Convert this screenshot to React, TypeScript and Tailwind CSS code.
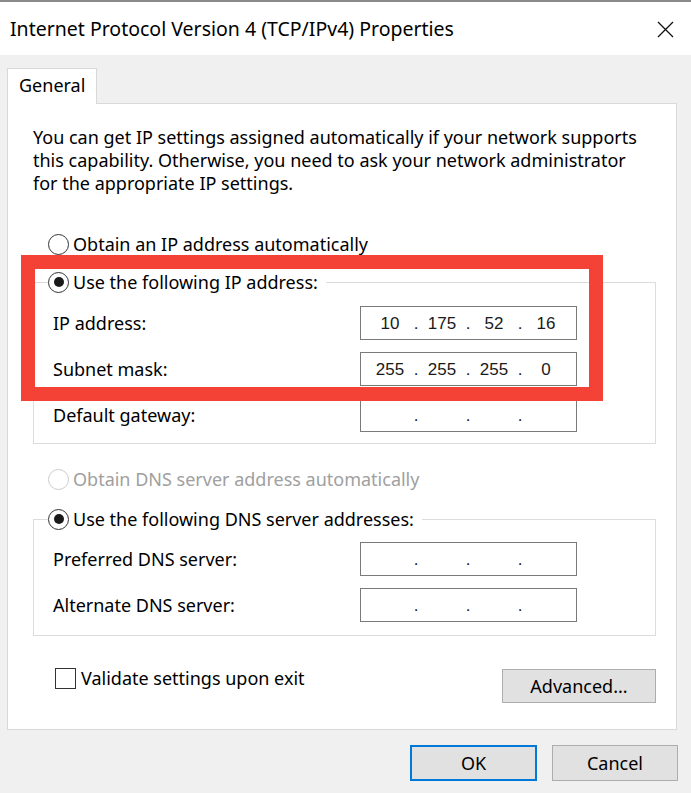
import { Fragment } from "react";

function Radio({ checked, disabled }: { checked?: boolean; disabled?: boolean }) {
  return (
    <span
      className={
        disabled
          ? "flex h-[21px] w-[21px] shrink-0 items-center justify-center rounded-full border-[1.5px] border-[#cccccc] bg-white"
          : "flex h-[21px] w-[21px] shrink-0 items-center justify-center rounded-full border-[1.5px] border-[#333333] bg-white"
      }
    >
      {checked && <span className="h-[10px] w-[10px] rounded-full bg-[#1a1a1a]" />}
    </span>
  );
}

function IpBox({ parts }: { parts: string[] }) {
  return (
    <div className="flex h-[34px] w-[217px] items-center border border-[#7a7a7a] bg-white pl-[6px] font-['Liberation_Sans',sans-serif] text-[17px] text-[#1a1a1a]">
      {parts.map((p, i) => (
        <Fragment key={i}>
          {i > 0 && <span className="w-[6px] text-center">.</span>}
          <span className="w-[46px] text-center">{p}</span>
        </Fragment>
      ))}
    </div>
  );
}

function Field({ label, parts }: { label: string; parts: string[] }) {
  return (
    <div className="flex items-center">
      <span className="w-[307px]">{label}</span>
      <IpBox parts={parts} />
    </div>
  );
}

export default function App() {
  const empty = ["", "", "", ""];
  return (
    <div className="relative h-[793px] w-[691px] overflow-hidden bg-[#f0f0f0] font-['Noto_Sans',sans-serif] text-[18px] leading-[23px] text-black">
      {/* Title bar */}
      <div className="h-[55px] border-t-2 border-[#8a8a8a] bg-white">
        <div className="flex h-full items-center justify-between pl-[10px] pr-[17px]">
          <span className="text-[19.5px]">Internet Protocol Version 4 (TCP/IPv4) Properties</span>
          <svg width="17" height="17" viewBox="0 0 17 17" className="mt-[1px]">
            <path d="M1 1 L16 16 M16 1 L1 16" stroke="#111" strokeWidth="1.3" fill="none" />
          </svg>
        </div>
      </div>

      {/* Tab */}
      <div className="relative z-10 ml-[7px] mt-[13px] -mb-px flex h-[36px] w-[90px] items-start border border-b-0 border-[#d9d9d9] bg-white pl-[11px] pt-[5px]">
        General
      </div>

      {/* Panel */}
      <div className="ml-[7px] h-[627px] w-[670px] border border-[#d9d9d9] bg-white pl-[25px] pr-[20px] pt-[22px]">
        <p>
          You can get IP settings assigned automatically if your network supports
          <br />
          this capability. Otherwise, you need to ask your network administrator
          <br />
          for the appropriate IP settings.
        </p>

        <div className="ml-[15px] mt-[37px] flex h-[24px] items-center gap-[4px]">
          <Radio />
          <span>Obtain an IP address automatically</span>
        </div>

        <fieldset className="mt-[14px] w-[623px] border border-[#dcdcdc] pb-[11px] pl-[19px] pr-[14px]">
          <legend className="ml-[-5px] flex h-[24px] items-center gap-[4px] pr-[8px]">
            <Radio checked />
            <span>Use the following IP address:</span>
          </legend>
          <div className="mt-[12px] flex flex-col gap-[12px]">
            <Field label="IP address:" parts={["10", "175", "52", "16"]} />
            <Field label="Subnet mask:" parts={["255", "255", "255", "0"]} />
            <Field label="Default gateway:" parts={empty} />
          </div>
        </fieldset>

        <div className="ml-[15px] mt-[23px] flex h-[24px] items-center gap-[4px] text-[#a0a0a0]">
          <Radio disabled />
          <span>Obtain DNS server address automatically</span>
        </div>

        <fieldset className="mt-[16px] w-[623px] border border-[#dcdcdc] pb-[13px] pl-[19px] pr-[14px]">
          <legend className="ml-[-5px] flex h-[24px] items-center gap-[4px] pr-[8px]">
            <Radio checked />
            <span>Use the following DNS server addresses:</span>
          </legend>
          <div className="mt-[11px] flex flex-col gap-[12px]">
            <Field label="Preferred DNS server:" parts={empty} />
            <Field label="Alternate DNS server:" parts={empty} />
          </div>
        </fieldset>

        <div className="mt-[31px] flex w-[623px] items-start justify-between">
          <div className="ml-[22px] flex h-[22px] items-center gap-[5px]">
            <span className="h-[21px] w-[21px] border-[1.5px] border-[#333333] bg-white" />
            <span>Validate settings upon exit</span>
          </div>
          <button className="mt-[2px] h-[34px] w-[154px] border border-[#adadad] bg-[#e1e1e1]">
            Advanced...
          </button>
        </div>
      </div>

      {/* Dialog buttons */}
      <div className="mt-[15px] flex justify-end gap-[15px] pr-[13px]">
        <button className="h-[36px] w-[127px] border-2 border-[#0078d7] bg-[#e1e1e1]">OK</button>
        <button className="h-[36px] w-[126px] border border-[#adadad] bg-[#e1e1e1]">Cancel</button>
      </div>

      {/* Highlight annotation */}
      <div className="pointer-events-none absolute left-[21px] top-[255px] h-[146px] w-[582px] border-[14px] border-[#f44336]" />
    </div>
  );
}
